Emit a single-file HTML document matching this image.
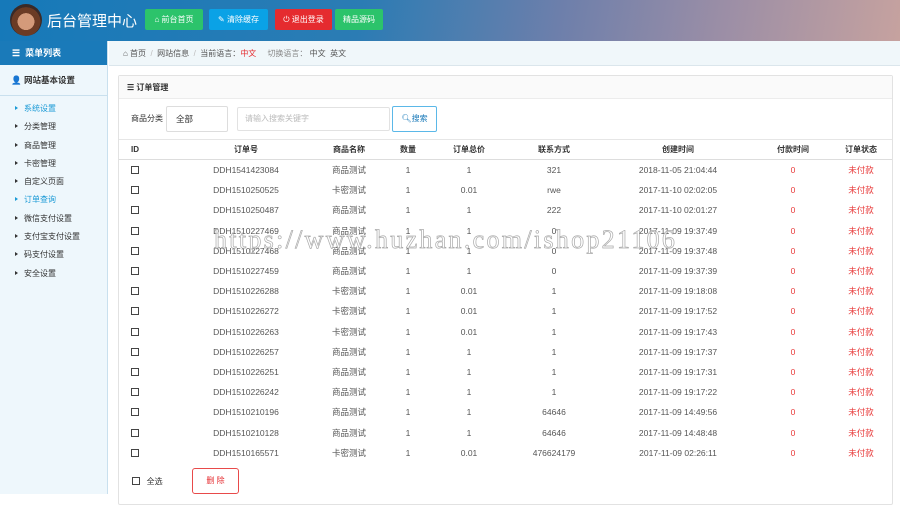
<!DOCTYPE html>
<html><head><meta charset="utf-8"><style>
*{margin:0;padding:0;box-sizing:border-box}
body{width:900px;height:494px;overflow:hidden;font-family:"Liberation Sans","Noto Sans CJK SC",sans-serif;font-size:9px;color:#333;background:#fff;position:relative}
.hd{position:absolute;left:0;top:0;width:900px;height:41px;background:linear-gradient(100deg,#1679b9 0%,#2b7cb4 40%,#6d7fab 62%,#9b8ea6 80%,#c6a29f 100%)}
.av{position:absolute;left:10px;top:4px;width:32px;height:32px;border-radius:50%;background:radial-gradient(circle at 50% 55%,#d49a7a 0 35%,#6b3b25 36% 60%,#3a2a28 61%)}
.title{position:absolute;left:47px;top:10px;font-size:15px;color:#fff}
.btn{position:absolute;top:9px;height:21px;line-height:21px;color:#fff;font-size:8px;text-align:center;border-radius:2px}
.sb{position:absolute;left:0;top:41px;width:108px;height:453px;background:#eef7fc;border-right:1px solid #c9e0ee}
.sbh{height:24px;background:#1a7ab9;color:#fff;font-size:9px;line-height:24px;padding-left:12px;font-weight:bold}
.sbg{height:31px;line-height:31px;padding-left:11px;font-weight:bold;border-bottom:1px solid #c9e0ee;font-size:8.5px}
.sbi{height:18.3px;line-height:18.3px;padding-left:15px;font-size:8px}
.sbi:before{content:"";display:inline-block;border-left:3px solid #333;border-top:2.5px solid transparent;border-bottom:2.5px solid transparent;margin-right:6px;vertical-align:1px}
.sbi.a{color:#1a9ad6}.sbi.a:before{border-left-color:#1a9ad6}
.bc{position:absolute;left:109px;top:41px;width:791px;height:25px;background:#f0f7fa;border-bottom:1px solid #dbe6ec;line-height:25px;padding-left:14px;font-size:8px;color:#555}
.pn{position:absolute;left:118px;top:75px;width:775px;height:430px;border:1px solid #e2e2e2;border-radius:2px}
.ph{height:23px;background:#fafafa;border-bottom:1px solid #ececec;line-height:23px;padding-left:8px;font-weight:bold;font-size:8px}
.row{position:absolute;left:0;width:773px;height:20px}
.row span{position:absolute;top:0;line-height:20px;transform:translateX(-50%);white-space:nowrap;font-size:8.5px;color:#555}
.th{top:63px;border-top:1px solid #e6e6e6;border-bottom:1px solid #ddd;height:21px}
.th span{color:#333;font-weight:bold;font-size:8px}
.row span:nth-child(1){left:16px}.row span:nth-child(2){left:127px}.row span:nth-child(3){left:230px}.row span:nth-child(4){left:289px}.row span:nth-child(5){left:350px}.row span:nth-child(6){left:435px}.row span:nth-child(7){left:559px}.row span:nth-child(8){left:674px}.row span:nth-child(9){left:742px}
.row span.r{color:#e83b3b}
.cb{display:inline-block;width:8px;height:8px;border:1px solid #444;vertical-align:-1px}
.wm{position:absolute;left:214px;top:225px;font-family:"Liberation Serif",serif;font-size:26px;color:rgba(255,255,255,.5);-webkit-text-stroke:0.7px #aaa;letter-spacing:2.3px;white-space:nowrap}
</style></head><body>
<div class="hd"><div class="av"></div><div class="title">后台管理中心</div>
<div class="btn" style="left:145px;width:58px;background:#2cc36b">⌂ 前台首页</div>
<div class="btn" style="left:209px;width:59px;background:#0aa2e6">✎ 清除缓存</div>
<div class="btn" style="left:275px;width:57px;background:#e52b2f">⏻ 退出登录</div>
<div class="btn" style="left:335px;width:48px;background:#2cc36b">精品源码</div></div>
<div class="sb"><div class="sbh">☰&nbsp; 菜单列表</div>
<div class="sbg">👤 网站基本设置</div>
<div style="height:4px"></div>
<div class="sbi a">系统设置</div><div class="sbi">分类管理</div><div class="sbi">商品管理</div><div class="sbi">卡密管理</div><div class="sbi">自定义页面</div><div class="sbi a">订单查询</div><div class="sbi">微信支付设置</div><div class="sbi">支付宝支付设置</div><div class="sbi">码支付设置</div><div class="sbi">安全设置</div></div>
<div class="bc">⌂ 首页 &nbsp;<span style="color:#bbb">/</span>&nbsp; 网站信息 &nbsp;<span style="color:#bbb">/</span>&nbsp; 当前语言：<span style="color:#e52b2f">中文</span> &nbsp;&nbsp;&nbsp; <span style="color:#888">切换语言：</span> 中文 &nbsp;英文</div>
<div class="pn"><div class="ph">☰ 订单管理</div>
<div style="position:absolute;left:12px;top:37px;font-size:8px">商品分类</div>
<div style="position:absolute;left:47px;top:30px;width:62px;height:26px;border:1px solid #ddd;border-radius:2px;line-height:24px;padding-left:9px;font-size:8.5px">全部</div>
<div style="position:absolute;left:118px;top:31px;width:153px;height:24px;border:1px solid #e2e2e2;border-radius:2px;line-height:22px;padding-left:7px;color:#bbb;font-size:8px">请输入搜索关键字</div>
<div style="position:absolute;left:273px;top:30px;width:45px;height:26px;border:1px solid #5bb8e8;border-radius:2px;line-height:24px;text-align:center;color:#1a7ab9;font-size:8px">🔍︎搜索</div>
<div class="row th"><span>ID</span><span>订单号</span><span>商品名称</span><span>数量</span><span>订单总价</span><span>联系方式</span><span>创建时间</span><span>付款时间</span><span>订单状态</span></div>
<div class="row" style="top:84px"><span><i class="cb"></i></span><span>DDH1541423084</span><span>商品测试</span><span>1</span><span>1</span><span>321</span><span>2018-11-05 21:04:44</span><span class="r">0</span><span class="r">未付款</span></div>
<div class="row" style="top:104.2px"><span><i class="cb"></i></span><span>DDH1510250525</span><span>卡密测试</span><span>1</span><span>0.01</span><span>rwe</span><span>2017-11-10 02:02:05</span><span class="r">0</span><span class="r">未付款</span></div>
<div class="row" style="top:124.4px"><span><i class="cb"></i></span><span>DDH1510250487</span><span>商品测试</span><span>1</span><span>1</span><span>222</span><span>2017-11-10 02:01:27</span><span class="r">0</span><span class="r">未付款</span></div>
<div class="row" style="top:144.6px"><span><i class="cb"></i></span><span>DDH1510227469</span><span>商品测试</span><span>1</span><span>1</span><span>0</span><span>2017-11-09 19:37:49</span><span class="r">0</span><span class="r">未付款</span></div>
<div class="row" style="top:164.8px"><span><i class="cb"></i></span><span>DDH1510227468</span><span>商品测试</span><span>1</span><span>1</span><span>0</span><span>2017-11-09 19:37:48</span><span class="r">0</span><span class="r">未付款</span></div>
<div class="row" style="top:185px"><span><i class="cb"></i></span><span>DDH1510227459</span><span>商品测试</span><span>1</span><span>1</span><span>0</span><span>2017-11-09 19:37:39</span><span class="r">0</span><span class="r">未付款</span></div>
<div class="row" style="top:205.2px"><span><i class="cb"></i></span><span>DDH1510226288</span><span>卡密测试</span><span>1</span><span>0.01</span><span>1</span><span>2017-11-09 19:18:08</span><span class="r">0</span><span class="r">未付款</span></div>
<div class="row" style="top:225.4px"><span><i class="cb"></i></span><span>DDH1510226272</span><span>卡密测试</span><span>1</span><span>0.01</span><span>1</span><span>2017-11-09 19:17:52</span><span class="r">0</span><span class="r">未付款</span></div>
<div class="row" style="top:245.6px"><span><i class="cb"></i></span><span>DDH1510226263</span><span>卡密测试</span><span>1</span><span>0.01</span><span>1</span><span>2017-11-09 19:17:43</span><span class="r">0</span><span class="r">未付款</span></div>
<div class="row" style="top:265.8px"><span><i class="cb"></i></span><span>DDH1510226257</span><span>商品测试</span><span>1</span><span>1</span><span>1</span><span>2017-11-09 19:17:37</span><span class="r">0</span><span class="r">未付款</span></div>
<div class="row" style="top:286px"><span><i class="cb"></i></span><span>DDH1510226251</span><span>商品测试</span><span>1</span><span>1</span><span>1</span><span>2017-11-09 19:17:31</span><span class="r">0</span><span class="r">未付款</span></div>
<div class="row" style="top:306.2px"><span><i class="cb"></i></span><span>DDH1510226242</span><span>商品测试</span><span>1</span><span>1</span><span>1</span><span>2017-11-09 19:17:22</span><span class="r">0</span><span class="r">未付款</span></div>
<div class="row" style="top:326.4px"><span><i class="cb"></i></span><span>DDH1510210196</span><span>商品测试</span><span>1</span><span>1</span><span>64646</span><span>2017-11-09 14:49:56</span><span class="r">0</span><span class="r">未付款</span></div>
<div class="row" style="top:346.6px"><span><i class="cb"></i></span><span>DDH1510210128</span><span>商品测试</span><span>1</span><span>1</span><span>64646</span><span>2017-11-09 14:48:48</span><span class="r">0</span><span class="r">未付款</span></div>
<div class="row" style="top:366.8px"><span><i class="cb"></i></span><span>DDH1510165571</span><span>卡密测试</span><span>1</span><span>0.01</span><span>476624179</span><span>2017-11-09 02:26:11</span><span class="r">0</span><span class="r">未付款</span></div>
<div style="position:absolute;left:13px;top:400px;font-size:8px"><i class="cb"></i>&nbsp;&nbsp; 全选</div>
<div style="position:absolute;left:73px;top:392px;width:47px;height:26px;border:1px solid #e84a4a;border-radius:3px;color:#e52b2f;text-align:center;line-height:24px;font-size:8px">删 除</div>
</div>
<div class="wm">https://www.huzhan.com/ishop21106</div>
</body></html>
